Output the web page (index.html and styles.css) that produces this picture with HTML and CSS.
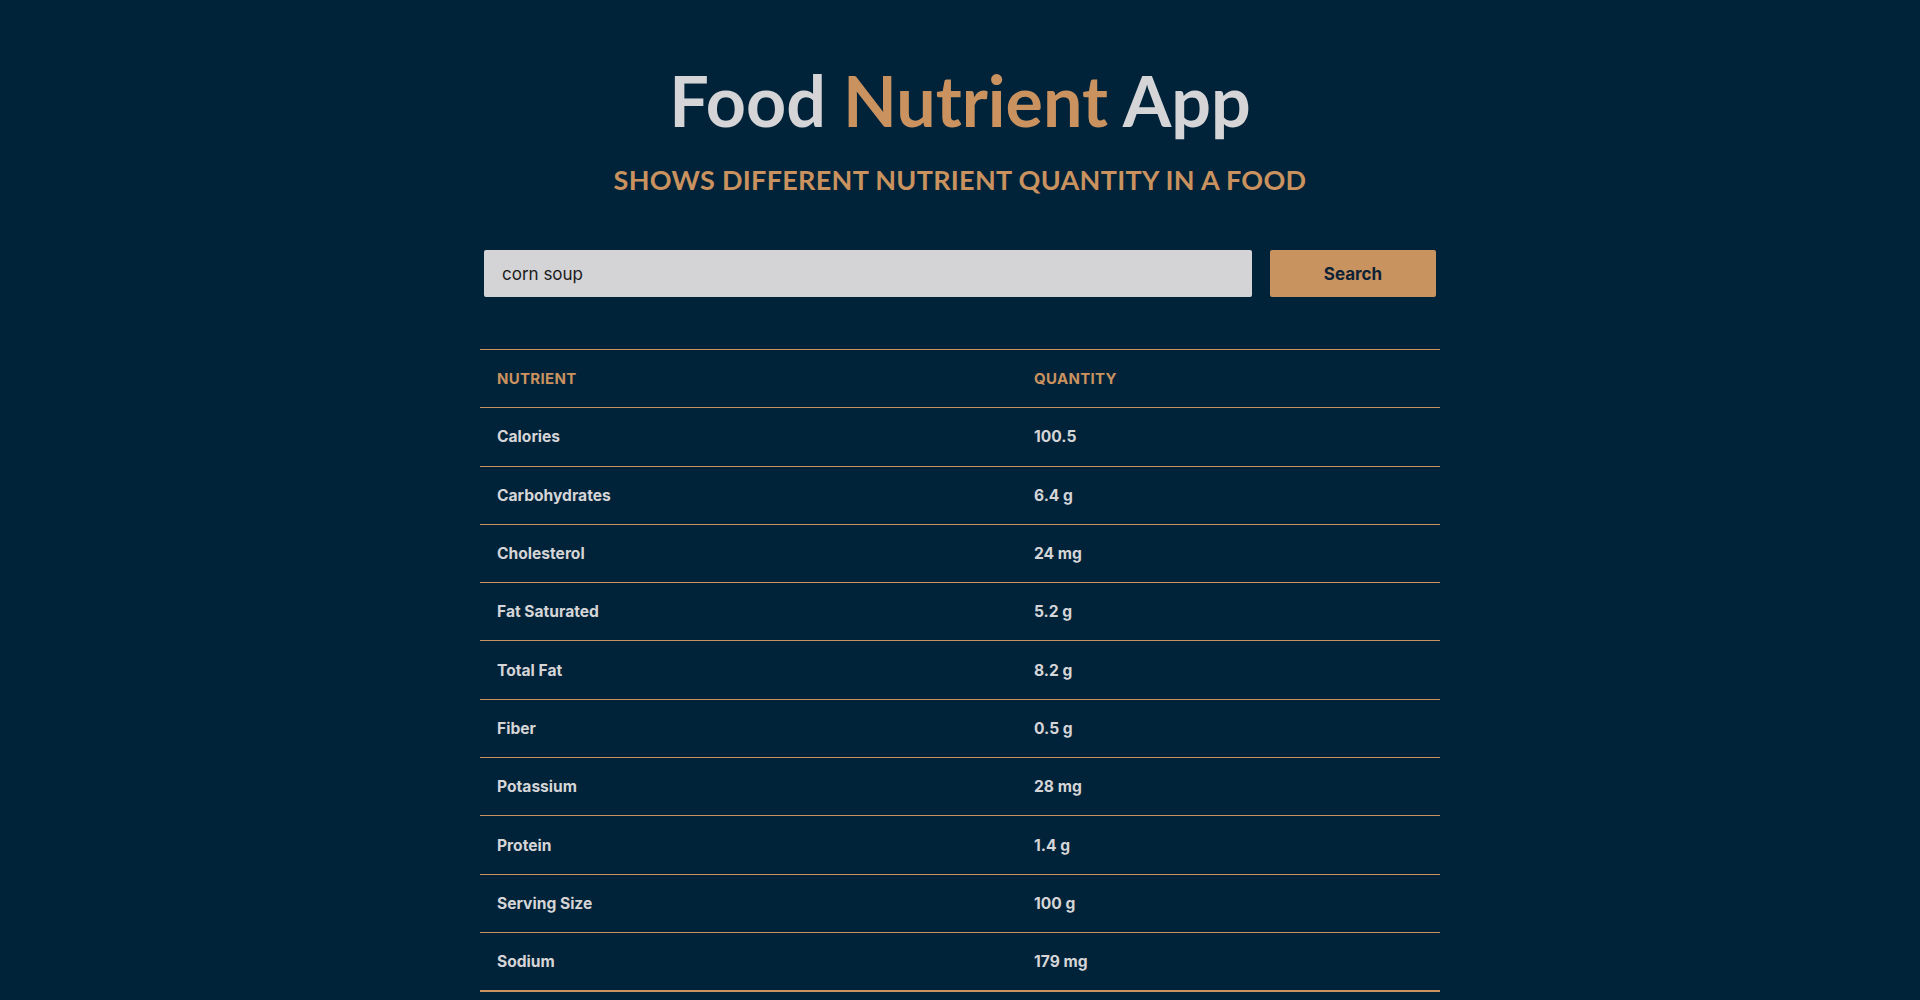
FILE: index.html
```html
<!DOCTYPE html>
<html lang="en">
<head>
<meta charset="utf-8">
<title>Food Nutrient App</title>
<link rel="stylesheet" href="styles.css">
</head>
<body>
<main class="app">
  <header class="hero">
    <h1 class="title">Food <span class="accent">Nutrient</span> App</h1>
    <h2 class="subtitle">SHOWS DIFFERENT NUTRIENT QUANTITY IN A FOOD</h2>
  </header>
  <form class="search">
    <input class="search-input" type="text" value="corn soup">
    <button class="search-btn" type="button">Search</button>
  </form>
  <table class="nutrients">
    <thead>
      <tr><th class="col-name">NUTRIENT</th><th>QUANTITY</th></tr>
    </thead>
    <tbody>
      <tr><td>Calories</td><td>100.5</td></tr>
      <tr><td>Carbohydrates</td><td>6.4 g</td></tr>
      <tr><td>Cholesterol</td><td>24 mg</td></tr>
      <tr><td>Fat Saturated</td><td>5.2 g</td></tr>
      <tr><td>Total Fat</td><td>8.2 g</td></tr>
      <tr><td>Fiber</td><td>0.5 g</td></tr>
      <tr><td>Potassium</td><td>28 mg</td></tr>
      <tr><td>Protein</td><td>1.4 g</td></tr>
      <tr><td>Serving Size</td><td>100 g</td></tr>
      <tr><td>Sodium</td><td>179 mg</td></tr>
    </tbody>
  </table>
</main>
</body>
</html>
```

FILE: styles.css
```css
html, body {
  margin: 0;
  padding: 0;
  background: #01233a;
}
body {
  font-family: "Lato", "Liberation Sans", sans-serif;
  color: #d5d5d7;
}
.app {
  width: 960px;
  margin: 0 auto;
  padding-top: 60px;
}
.hero {
  text-align: center;
}
.title {
  margin: 0;
  font-size: 70px;
  line-height: 80px;
  font-weight: 700;
  color: #d5d5d7;
  letter-spacing: 0;
}
.accent {
  color: #c9925f;
}
.subtitle {
  margin: 24px 0 0;
  font-size: 27px;
  line-height: 32px;
  font-weight: 700;
  color: #c9925f;
  letter-spacing: 0.3px;
}
.search {
  display: flex;
  gap: 18px;
  margin: 54px 4px 0;
}
.search-input {
  flex: 1;
  height: 47px;
  box-sizing: border-box;
  border: none;
  border-radius: 2px;
  background: #d4d4d6;
  padding: 0 18px;
  font-family: "Inter", "Liberation Sans", sans-serif;
  font-size: 17px;
  color: #1a1a1a;
  outline: none;
}
.search-btn {
  width: 166px;
  height: 47px;
  border: none;
  border-radius: 2px;
  background: #c9935f;
  color: #0d2236;
  font-family: "Inter", "Liberation Sans", sans-serif;
  font-size: 17px;
  font-weight: 700;
}
.nutrients {
  width: 960px;
  margin-top: 52px;
  border-collapse: collapse;
  font-family: "Inter", "Liberation Sans", sans-serif;
  font-size: 15.6px;
  font-weight: 700;
}
.nutrients th,
.nutrients td {
  height: 57.3px;
  padding: 0 17px;
  text-align: left;
  border-top: 1px solid #c9925f;
  border-bottom: 1px solid #c9925f;
}
.nutrients th {
  color: #c9925f;
  font-size: 15px;
  letter-spacing: 0.3px;
}
.nutrients td {
  color: #d5d5d7;
}
.col-name {
  width: 503px;
}
.nutrients tbody tr:last-child td {
  border-bottom-width: 2px;
}
```
